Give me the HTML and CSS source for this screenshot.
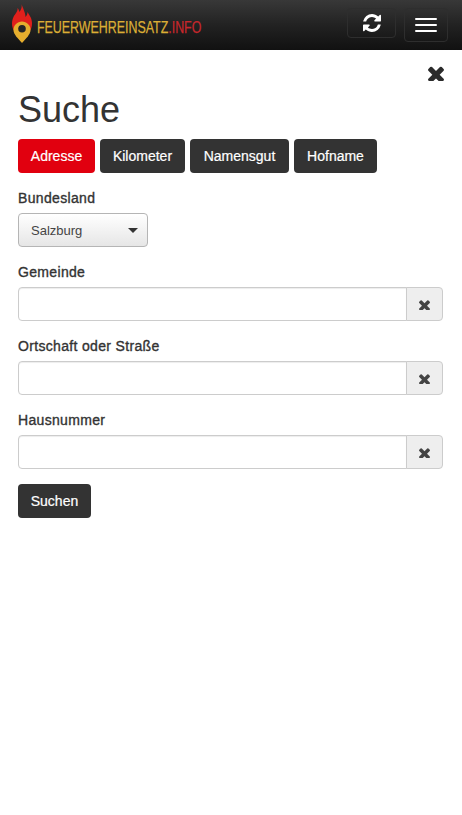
FILE: index.html
```html
<!DOCTYPE html>
<html lang="de">
<head>
<meta charset="utf-8">
<title>Suche</title>
<link rel="stylesheet" href="styles.css">
</head>
<body>
<nav class="navbar">
  <a class="brand">
    <svg class="logo" viewBox="0 0 20 41" width="20" height="41">
      <path fill="#e0201c" d="M9 0c1.500 4 .500 7-1.500 10C7 8 6.500 7 5.500 6 6 10 3 12 1.500 15 -.500 19-.500 24 1.500 28L4 31h12l2.500-3c2-4 2-9 0-13-1-2-2-3-3-5 0 2-1 4-2 5 0-5-3-9-4.500-15z"/>
      <path fill="#e6ae2e" d="M10 19.500c-4.700 0-8.500 3.700-8.500 8.300 0 2.700 1.200 4.500 2.700 6.700L10 41l5.800-6.500c1.500-2.200 2.700-4 2.700-6.700 0-4.600-3.800-8.300-8.500-8.300z"/>
      <circle cx="10" cy="26.800" r="3.800" fill="#262626"/>
    </svg>
    <span class="brand-text">FEUERWEHREINSATZ<span class="brand-info">.INFO</span></span>
  </a>
  <div class="nav-actions">
    <button class="nav-btn refresh-btn" type="button" aria-label="Aktualisieren">
      <svg class="icon-refresh" viewBox="128 128 1536 1536" width="18" height="18"><path fill="#fff" d="M1639 1056q0 5-1 7-64 268-268 434.500t-478 166.500q-146 0-282.500-55t-243.500-157l-129 129q-19 19-45 19t-45-19-19-45v-448q0-26 19-45t45-19h448q26 0 45 19t19 45-19 45l-137 137q71 66 161 102t187 36q134 0 250-65t186-179q11-17 53-117 8-23 30-23h192q13 0 22.500 9.500t9.500 22.500zm25-800v448q0 26-19 45t-45 19h-448q-26 0-45-19t-19-45 19-45l138-138q-148-137-349-137-134 0-250 65t-186 179q-11 17-53 117-8 23-30 23h-199q-13 0-22.500-9.500t-9.500-22.500v-7q65-268 270-434.500t480-166.500q146 0 284 55.500t245 156.500l130-129q19-19 45-19t45 19 19 45z"/></svg>
    </button>
    <button class="nav-btn toggle-btn" type="button" aria-label="Menü">
      <span class="bar"></span><span class="bar"></span><span class="bar"></span>
    </button>
  </div>
</nav>
<main class="content">
  <button class="close" type="button" aria-label="Schließen">
    <svg viewBox="302 238 1188 1188" width="16" height="16"><path fill="#2b2b2b" d="M1490 1322q0 40-28 68l-136 136q-28 28-68 28t-68-28l-294-294-294 294q-28 28-68 28t-68-28l-136-136q-28-28-28-68t28-68l294-294-294-294q-28-28-28-68t28-68l136-136q28-28 68-28t68 28l294 294 294-294q28-28 68-28t68 28l136 136q28 28 28 68t-28 68l-294 294 294 294q28 28 28 68z"/></svg>
  </button>
  <h1>Suche</h1>
  <div class="tabs">
    <button class="btn btn-red" type="button">Adresse</button>
    <button class="btn" type="button">Kilometer</button>
    <button class="btn" type="button">Namensgut</button>
    <button class="btn" type="button">Hofname</button>
  </div>
  <form>
    <div class="group">
      <label>Bundesland</label>
      <div class="select">Salzburg<span class="caret"></span></div>
    </div>
    <div class="group">
      <label>Gemeinde</label>
      <div class="input-group">
        <input type="text">
        <span class="addon"><svg viewBox="302 238 1188 1188" width="11" height="11"><path fill="#444" d="M1490 1322q0 40-28 68l-136 136q-28 28-68 28t-68-28l-294-294-294 294q-28 28-68 28t-68-28l-136-136q-28-28-28-68t28-68l294-294-294-294q-28-28-28-68t28-68l136-136q28-28 68-28t68 28l294 294 294-294q28-28 68-28t68 28l136 136q28 28 28 68t-28 68l-294 294 294 294q28 28 28 68z"/></svg></span>
      </div>
    </div>
    <div class="group">
      <label>Ortschaft oder Straße</label>
      <div class="input-group">
        <input type="text">
        <span class="addon"><svg viewBox="302 238 1188 1188" width="11" height="11"><path fill="#444" d="M1490 1322q0 40-28 68l-136 136q-28 28-68 28t-68-28l-294-294-294 294q-28 28-68 28t-68-28l-136-136q-28-28-28-68t28-68l294-294-294-294q-28-28-28-68t28-68l136-136q28-28 68-28t68 28l294 294 294-294q28-28 68-28t68 28l136 136q28 28 28 68t-28 68l-294 294 294 294q28 28 28 68z"/></svg></span>
      </div>
    </div>
    <div class="group">
      <label>Hausnummer</label>
      <div class="input-group">
        <input type="text">
        <span class="addon"><svg viewBox="302 238 1188 1188" width="11" height="11"><path fill="#444" d="M1490 1322q0 40-28 68l-136 136q-28 28-68 28t-68-28l-294-294-294 294q-28 28-68 28t-68-28l-136-136q-28-28-28-68t28-68l294-294-294-294q-28-28-28-68t28-68l136-136q28-28 68-28t68 28l294 294 294-294q28-28 68-28t68 28l136 136q28 28 28 68t-28 68l-294 294 294 294q28 28 28 68z"/></svg></span>
      </div>
    </div>
    <button class="btn btn-submit" type="button">Suchen</button>
  </form>
</main>
</body>
</html>
```
FILE: styles.css
```css
* { box-sizing: border-box; }
html, body { margin: 0; padding: 0; background: #fff; }
body { font: 14px/20px "Liberation Sans", Arial, sans-serif; color: #333; }

.navbar {
  height: 50px;
  display: flex;
  justify-content: space-between;
  padding: 0 14px 0 12px;
  background: linear-gradient(to bottom, #383838 0, #222 50%, #111 100%);
}
.brand { display: flex; align-items: flex-start; padding-top: 2px; }
.logo { display: block; }
.brand-text {
  margin: 16px 0 0 5px;
  font: 17px/20px "Liberation Sans", sans-serif;
  color: #dcae35;
  -webkit-text-stroke: .25px currentColor;
  white-space: nowrap;
  transform: scaleX(.73);
  transform-origin: left center;
}
.brand-info { color: #c8272c; }
.nav-actions { display: flex; align-items: flex-start; gap: 8px; padding-top: 8px; }
.nav-btn {
  display: flex;
  align-items: center;
  justify-content: center;
  background: transparent;
  border: 1px solid #2e2e2e;
  border-radius: 4px;
  padding: 0;
}
.refresh-btn { width: 49px; height: 30px; }
.toggle-btn { width: 44px; height: 34px; flex-direction: column; gap: 4px; }
.bar { display: block; width: 22px; height: 2px; background: #fff; border-radius: 1px; }

.content { padding: 0 19px 0 18px; }
.close {
  float: right;
  margin: 15px -1px 0 0;
  padding: 0;
  background: none;
  border: 0;
  line-height: 0;
}
h1 {
  margin: 0;
  padding: 40px 0 9px;
  font-size: 36px;
  line-height: 40px;
  font-weight: 500;
  color: #333;
}
.tabs { display: grid; grid-template-columns: 77px 85px 99px 83px; gap: 5px; margin-bottom: 15px; }
.btn {
  height: 34px;
  padding: 0;
  font: 14px/20px "Liberation Sans", Arial, sans-serif;
  color: #fff;
  background: #333;
  border: 0;
  border-radius: 4px;
  -webkit-text-stroke: .2px currentColor;
}
.btn-red { background: #e1000f; }
.btn-submit { width: 73px; }
.group { margin-bottom: 15px; }
label {
  display: block;
  margin-bottom: 5px;
  letter-spacing: .33px;
  -webkit-text-stroke: .35px currentColor;
}
.select {
  position: relative;
  width: 130px;
  height: 34px;
  padding: 7px 12px 5px;
  font-size: 13px;
  color: #444;
  border: 1px solid #b5b5b5;
  border-radius: 4px;
  background: linear-gradient(to bottom, #fff, #e6e6e6);
}
.caret {
  position: absolute;
  right: 9px;
  top: 14px;
  border-top: 5px solid #333;
  border-left: 5px solid transparent;
  border-right: 5px solid transparent;
}
.input-group { display: flex; height: 34px; }
input {
  flex: 1;
  min-width: 0;
  height: 34px;
  border: 1px solid #ccc;
  border-radius: 4px 0 0 4px;
  box-shadow: inset 0 1px 1px rgba(0,0,0,.075);
  background: #fff;
}
.addon {
  width: 37px;
  margin-left: -1px;
  display: flex;
  align-items: center;
  justify-content: center;
  background: #eee;
  border: 1px solid #ccc;
  border-radius: 0 4px 4px 0;
}
```
